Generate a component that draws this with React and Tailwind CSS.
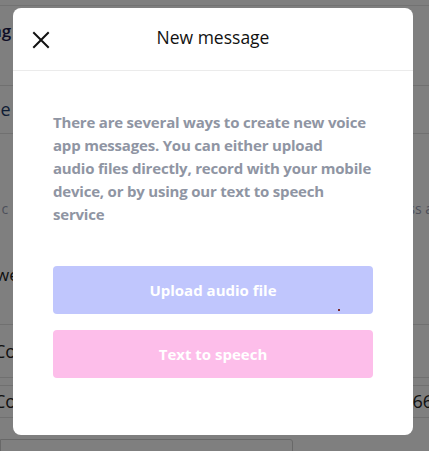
export default function App() {
  return (
    <div className="relative w-[429px] h-[451px] overflow-hidden bg-white" style={{ fontFamily: '"Open Sans", "Liberation Sans", sans-serif' }}>
      {/* underlying page */}
      <div className="flex flex-col text-[#1a1a2e]">
        <div className="h-[6px] border-b border-[#e5e5e5]" />
        <div className="h-[80px] border-b border-[#e0e0e0] flex items-start pt-[12px]">
          <span className="text-[17px] font-semibold text-[#1c1a4a] -ml-[50px]">Messag</span>
        </div>
        <div className="h-[48px] border-b border-[#e0e0e0] flex items-center">
          <span className="text-[18px] text-[#1d3b6b] -ml-[25px]">Title</span>
        </div>
        <div className="h-[128px] flex items-start pt-[64px] justify-between">
          <span className="text-[14px] text-[#9aa0b5] -ml-[10px]">e c</span>
          <span className="text-[14px] text-[#9aa0b5] -mr-[4px]">ss a</span>
        </div>
        <div className="h-[62px] flex items-start">
          <span className="text-[17px] text-[#222] -ml-[4px]">we</span>
        </div>
        <div className="h-[53px] border-t border-[#e0e0e0] flex items-center">
          <span className="text-[18px] text-[#222] -ml-[6px]">Co</span>
        </div>
        <div className="h-[8px] border-t border-[#e0e0e0]" />
        <div className="h-[32px] border-t border-[#e0e0e0] flex items-center justify-between">
          <span className="text-[18px] text-[#222] -ml-[6px]">Co</span>
          <span className="text-[18px] text-[#222] -mr-[4px]">66</span>
        </div>
        <div className="h-[22px] border-t border-[#e0e0e0]" />
        <div className="w-[293px] h-[30px] border border-[#d0d0d0] rounded-tr-[3px]" />
      </div>

      {/* overlay */}
      <div className="absolute inset-0 bg-black/50" />

      {/* modal */}
      <div className="absolute left-[13px] top-[8px] w-[400px] h-[427px] bg-white rounded-[8px] flex flex-col">
        <div className="relative h-[63px] border-b border-[#ebebeb] flex items-center justify-center">
          <button className="absolute left-[18px] top-[22px] w-[20px] h-[20px] flex items-center justify-center">
            <svg width="20" height="20" viewBox="0 0 20 20" fill="none" stroke="#111" strokeWidth="2" strokeLinecap="square">
              <path d="M3 3 L17 17 M17 3 L3 17" />
            </svg>
          </button>
          <span className="text-[17.5px] text-[#111] leading-none -mt-[2px]">New message</span>
        </div>
        <div className="px-[40px] pt-[40px] pb-[56px] flex flex-col" style={{ fontFamily: '"Open Sans", "Noto Sans", sans-serif' }}>
          <p className="text-[15px] leading-[23px] font-bold tracking-[-0.2px] text-[#8f95a3] whitespace-nowrap">
            There are several ways to create new voice<br />
            app messages. You can either upload<br />
            audio files directly, record with your mobile<br />
            device, or by using our text to speech<br />
            service
          </p>
          <div className="mt-[40px] flex flex-col gap-[16px]">
            <div className="relative h-[48px] rounded-[4px] bg-[#c0c6fd] flex items-center justify-center text-white text-[15px] font-bold">
              Upload audio file
              <span className="absolute left-[285px] top-[43px] w-[2px] h-[2px] bg-[#7a2a2a]" />
            </div>
            <div className="h-[48px] rounded-[4px] bg-[#fdbeea] flex items-center justify-center text-white text-[15px] font-bold">
              Text to speech
            </div>
          </div>
        </div>
      </div>
    </div>
  );
}
